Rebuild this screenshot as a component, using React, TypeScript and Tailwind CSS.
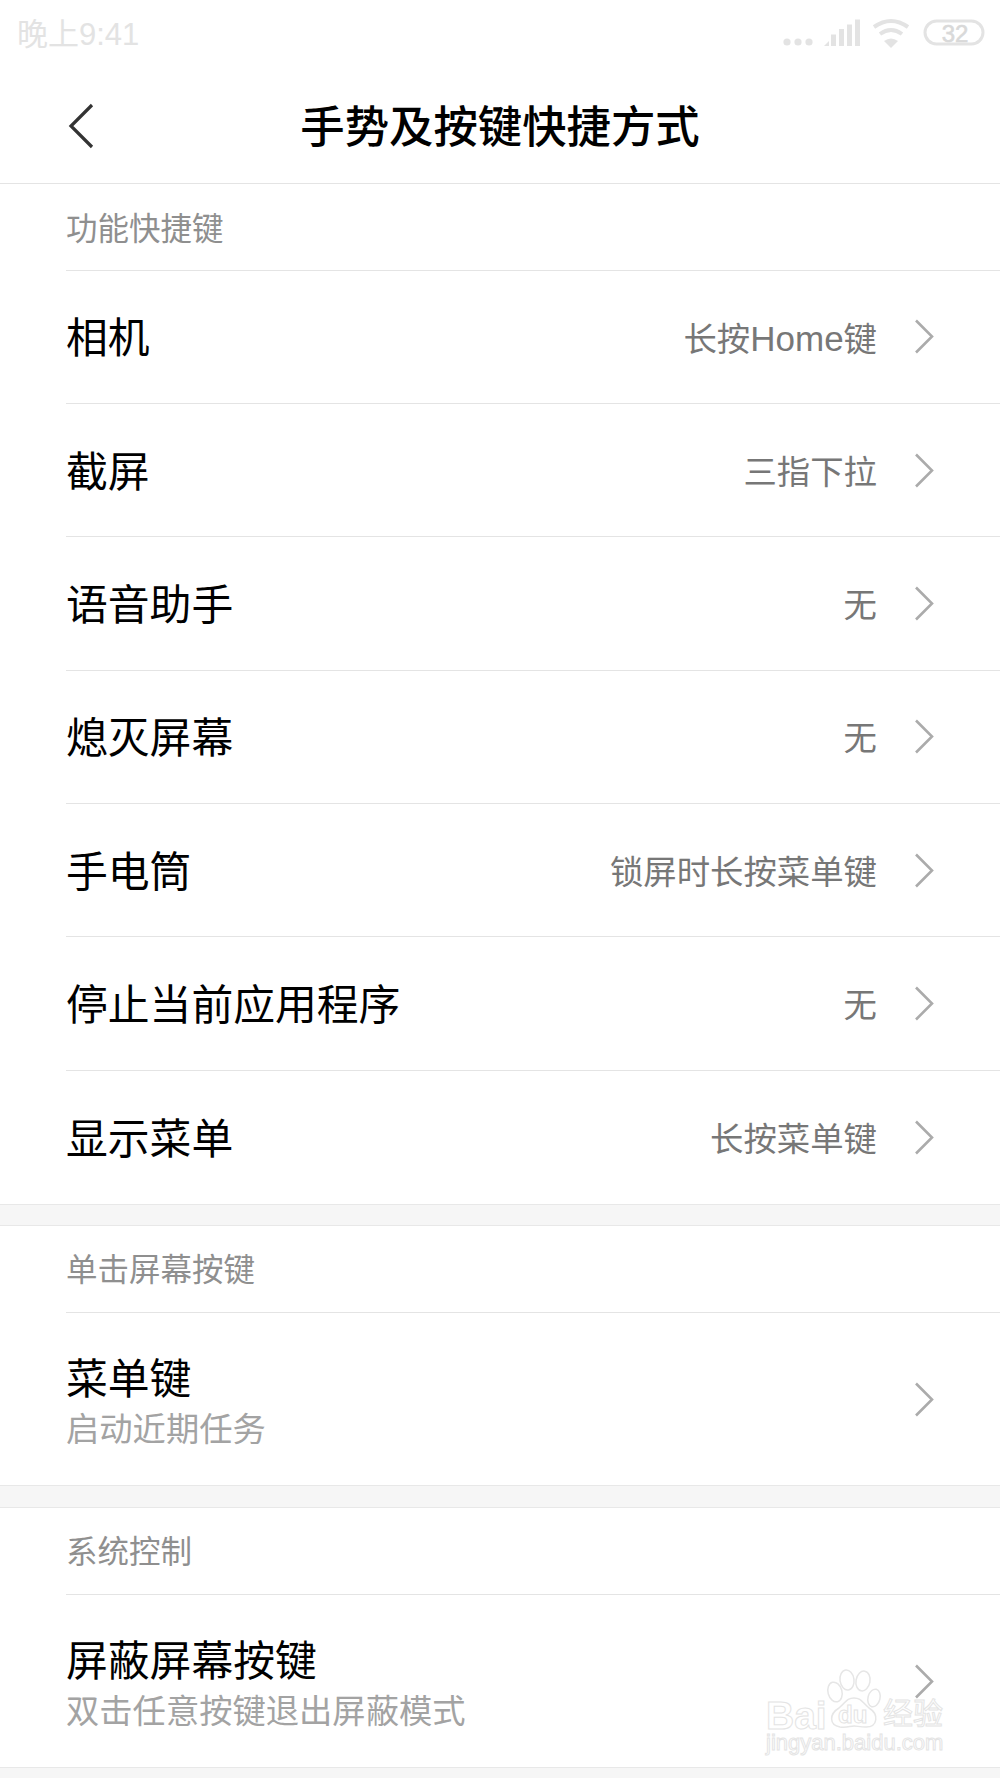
import type { ReactNode } from "react";

const sans = "font-['Liberation_Sans','Noto_Sans_CJK_SC',sans-serif]";

interface RowProps {
    title: string
    value?: ReactNode
    subtitle?: string
    last?: boolean
}

function Chevron() {
    return (
        <svg width="20" height="35" viewBox="0 0 20 35" fill="none" className="shrink-0">
            <path d="M2 1.5 L18 17.5 L2 33.5" stroke="#ababab" strokeWidth="2.6" />
        </svg>
    )
}

function Row({ title, value, subtitle, last }: RowProps) {
    return (
        <div className={`flex items-center ml-[66px] pr-[66px] ${subtitle ? "h-[172px] pt-[9px]" : "h-[133.4px]"} ${last ? "" : "border-b-[1.5px] border-[#e4e4e4]"}`}>
            <div className={`flex-1 ${subtitle ? "" : "pt-[5px]"}`}>
                <div className="text-[41.8px] leading-[52px] text-black">{title}</div>
                {subtitle && <div className="text-[33.3px] leading-[48px] text-[#a3a3a3]">{subtitle}</div>}
            </div>
            {value && <div className="flex items-baseline text-[33.4px] text-[#777777] mr-[37px] pt-[5px]">{value}</div>}
            <div className={subtitle ? "-mt-[9px]" : ""}>
                <Chevron />
            </div>
        </div>
    )
}

function SectionTitle({ children, className }: { children: string, className: string }) {
    return (
        <div className={`flex items-center ml-[66px] h-[87px] border-b-[1.5px] border-[#e4e4e4] text-[31.5px] text-[#8f8f8f] ${className}`}>
            {children}
        </div>
    )
}

function Gap({ className }: { className: string }) {
    return <div className={`bg-[#f6f6f6] border-y-[1.5px] border-[#e8e8e8] ${className}`} />
}

function StatusIcons() {
    return (
        <svg width="206" height="34" viewBox="0 0 206 34" fill="#e3e3e3" className="shrink-0">
            <circle cx="5" cy="24" r="3.6" />
            <circle cx="16" cy="24" r="3.6" />
            <circle cx="27" cy="24" r="3.6" />
            <path d="M42 28 L47 23 V28 Z" />
            <rect x="49" y="16.5" width="5" height="11.5" />
            <rect x="57" y="11" width="5" height="17" />
            <rect x="65" y="6.5" width="5" height="21.5" />
            <rect x="73" y="1.5" width="5" height="26.5" />
            <path d="M92 9 Q109 -3 126 9" fill="none" stroke="#e3e3e3" strokeWidth="4" />
            <path d="M98 16 Q109 8 120 16" fill="none" stroke="#e3e3e3" strokeWidth="4" />
            <path d="M109 30 L102 23 Q109 18 116 23 Z" />
            <rect x="143" y="3" width="58" height="23" rx="11.5" fill="#ffffff" stroke="#e3e3e3" strokeWidth="3" />
            <text x="173" y="23.5" textAnchor="middle" fontSize="24" fontFamily="Liberation Sans" fill="#d9d9d9" stroke="#d9d9d9" strokeWidth="0.6">32</text>
        </svg>
    )
}

function Watermark() {
    const outline = "text-transparent [-webkit-text-stroke:1px_#e4e4e4]";
    return (
        <div className="absolute left-[766px] top-[1668px] w-[182px] h-[92px]">
            <svg width="60" height="62" viewBox="0 0 60 62" fill="#ffffff" stroke="#e6e6e6" strokeWidth="1.5" className="absolute left-[60px] top-0">
                <ellipse cx="9" cy="24" rx="7" ry="10" transform="rotate(-15 9 24)" />
                <ellipse cx="21" cy="12" rx="7" ry="10" transform="rotate(-8 21 12)" />
                <ellipse cx="37" cy="13" rx="7" ry="10" transform="rotate(10 37 13)" />
                <ellipse cx="48" cy="30" rx="6" ry="9" transform="rotate(15 48 30)" />
                <path d="M28 30 C35 30 36 34 43 40 C53 46 52 59 40 59 C34 59 31 58 28 58 C24 58 21 60 14 59 C3 57 3 46 13 40 C20 34 21 30 28 30 Z" />
            </svg>
            <div className={`absolute left-0 top-[32px] text-[39px] leading-[32px] font-bold ${outline}`}>Bai</div>
            <div className={`absolute left-[72px] top-[32px] text-[24px] leading-[30px] font-bold ${outline}`}>du</div>
            <div className={`absolute left-[117px] top-[29px] text-[30px] leading-[34px] ${outline}`}>经验</div>
            <div className={`absolute left-0 top-[64px] text-[22px] leading-[22px] whitespace-nowrap ${outline}`}>jingyan.baidu.com</div>
        </div>
    )
}

function App() {
    return (
        <div className={`relative w-[1000px] h-[1778px] overflow-hidden bg-white ${sans}`}>
            <div className="flex items-center justify-between h-[70px] pl-[17px] pr-[12px]">
                <span className="text-[31px] text-[#e3e3e3]">晚上9:41</span>
                <StatusIcons />
            </div>
            <div className="grid grid-cols-[1fr_auto_1fr] items-center h-[113.5px] border-b-[1.5px] border-[#e4e4e4]">
                <svg width="28" height="46" viewBox="0 0 28 46" fill="none" className="ml-[67px]">
                    <path d="M25 2 L4 23 L25 44" stroke="#333333" strokeWidth="3.2" />
                </svg>
                <h1 className="text-[44.4px] font-medium text-black pt-[5px]">手势及按键快捷方式</h1>
                <div />
            </div>

            <SectionTitle className="pt-[7px]">功能快捷键</SectionTitle>
            <Row title="相机" value={<>长按<span className="text-[35px]">Home</span>键</>} />
            <Row title="截屏" value="三指下拉" />
            <Row title="语音助手" value="无" />
            <Row title="熄灭屏幕" value="无" />
            <Row title="手电筒" value="锁屏时长按菜单键" />
            <Row title="停止当前应用程序" value="无" />
            <Row title="显示菜单" value="长按菜单键" last />
            <Gap className="h-[22px]" />

            <SectionTitle className="pt-[3px]">单击屏幕按键</SectionTitle>
            <Row title="菜单键" subtitle="启动近期任务" last />
            <Gap className="h-[23px]" />

            <SectionTitle className="pt-[3px]">系统控制</SectionTitle>
            <Row title="屏蔽屏幕按键" subtitle="双击任意按键退出屏蔽模式" last />
            <div className="h-[12px] bg-[#f6f6f6] border-t-[1.5px] border-[#e8e8e8]" />

            <Watermark />
        </div>
    )
}

export default App
